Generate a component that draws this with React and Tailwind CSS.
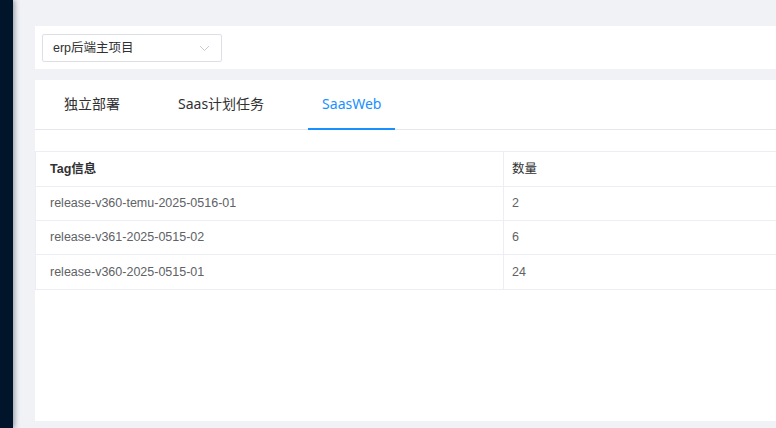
import React from "react";

const rows = [
  { tag: "release-v360-temu-2025-0516-01", count: 2 },
  { tag: "release-v361-2025-0515-02", count: 6 },
  { tag: "release-v360-2025-0515-01", count: 24 },
];

const tabs = ["独立部署", "Saas计划任务", "SaasWeb"];

export default function App() {
  const font = { fontFamily: '"Liberation Sans", "Noto Sans CJK SC", sans-serif' };
  const tabFont = { fontFamily: '"Noto Sans", "Noto Sans CJK SC", sans-serif' };
  return (
    <div className="flex h-[428px] w-[776px] overflow-hidden bg-[#f0f2f5]" style={font}>
      {/* sidebar */}
      <div className="w-[13px] shrink-0 bg-[#001529] shadow-[2px_0_5px_rgba(0,21,41,0.35)]" />

      <div className="flex min-w-0 flex-1 flex-col pl-[22px] pt-[26px]">
        {/* project select */}
        <div className="h-[43px] bg-white pl-[7px] pt-[8px]">
          <div className="flex h-[28px] w-[180px] items-center justify-between rounded-[2px] border border-[#dcdfe6] pl-[10px] pr-[11px]">
            <span className="text-[12.5px] text-[#303133]">erp后端主项目</span>
            <svg width="11" height="7" viewBox="0 0 11 7" fill="none">
              <path d="M1 1l4.5 4.5L10 1" stroke="#c8cbd1" strokeWidth="1" />
            </svg>
          </div>
        </div>

        {/* tabs + table */}
        <div className="mt-[11px] h-[341px] bg-white">
          <div className="flex h-[50px] gap-[30px] border-b border-[#e4e7ed] pl-[15px]" style={tabFont}>
            {tabs.map((t, i) => (
              <div
                key={t}
                className={
                  "relative flex items-center px-[14px] pb-[2px] text-[14px] " +
                  (i === 2 ? "text-[#1890ff]" : "text-[#303133]")
                }
              >
                {t}
                {i === 2 && (
                  <div className="absolute bottom-[-1px] left-0 right-0 h-[2px] bg-[#1890ff]" />
                )}
              </div>
            ))}
          </div>

          <div className="mt-[21px] overflow-hidden">
            <table className="w-[936px] border-collapse text-[12.5px]">
              <thead>
                <tr>
                  <th className="h-[35px] w-[468px] border border-[#ebeef5] pl-[14px] text-left font-semibold text-[#303133]">
                    Tag信息
                  </th>
                  <th className="h-[35px] border border-[#ebeef5] pl-[8px] text-left font-normal text-[#303133]">
                    数量
                  </th>
                </tr>
              </thead>
              <tbody>
                {rows.map((r, i) => (
                  <tr key={r.tag}>
                    <td
                      className={
                        "border border-[#ebeef5] pl-[14px] text-[#606266] " +
                        (i === 2 ? "h-[35px]" : "h-[34px]")
                      }
                    >
                      {r.tag}
                    </td>
                    <td className="border border-[#ebeef5] pl-[8px] text-[#606266]">{r.count}</td>
                  </tr>
                ))}
              </tbody>
            </table>
          </div>
        </div>
      </div>
    </div>
  );
}
